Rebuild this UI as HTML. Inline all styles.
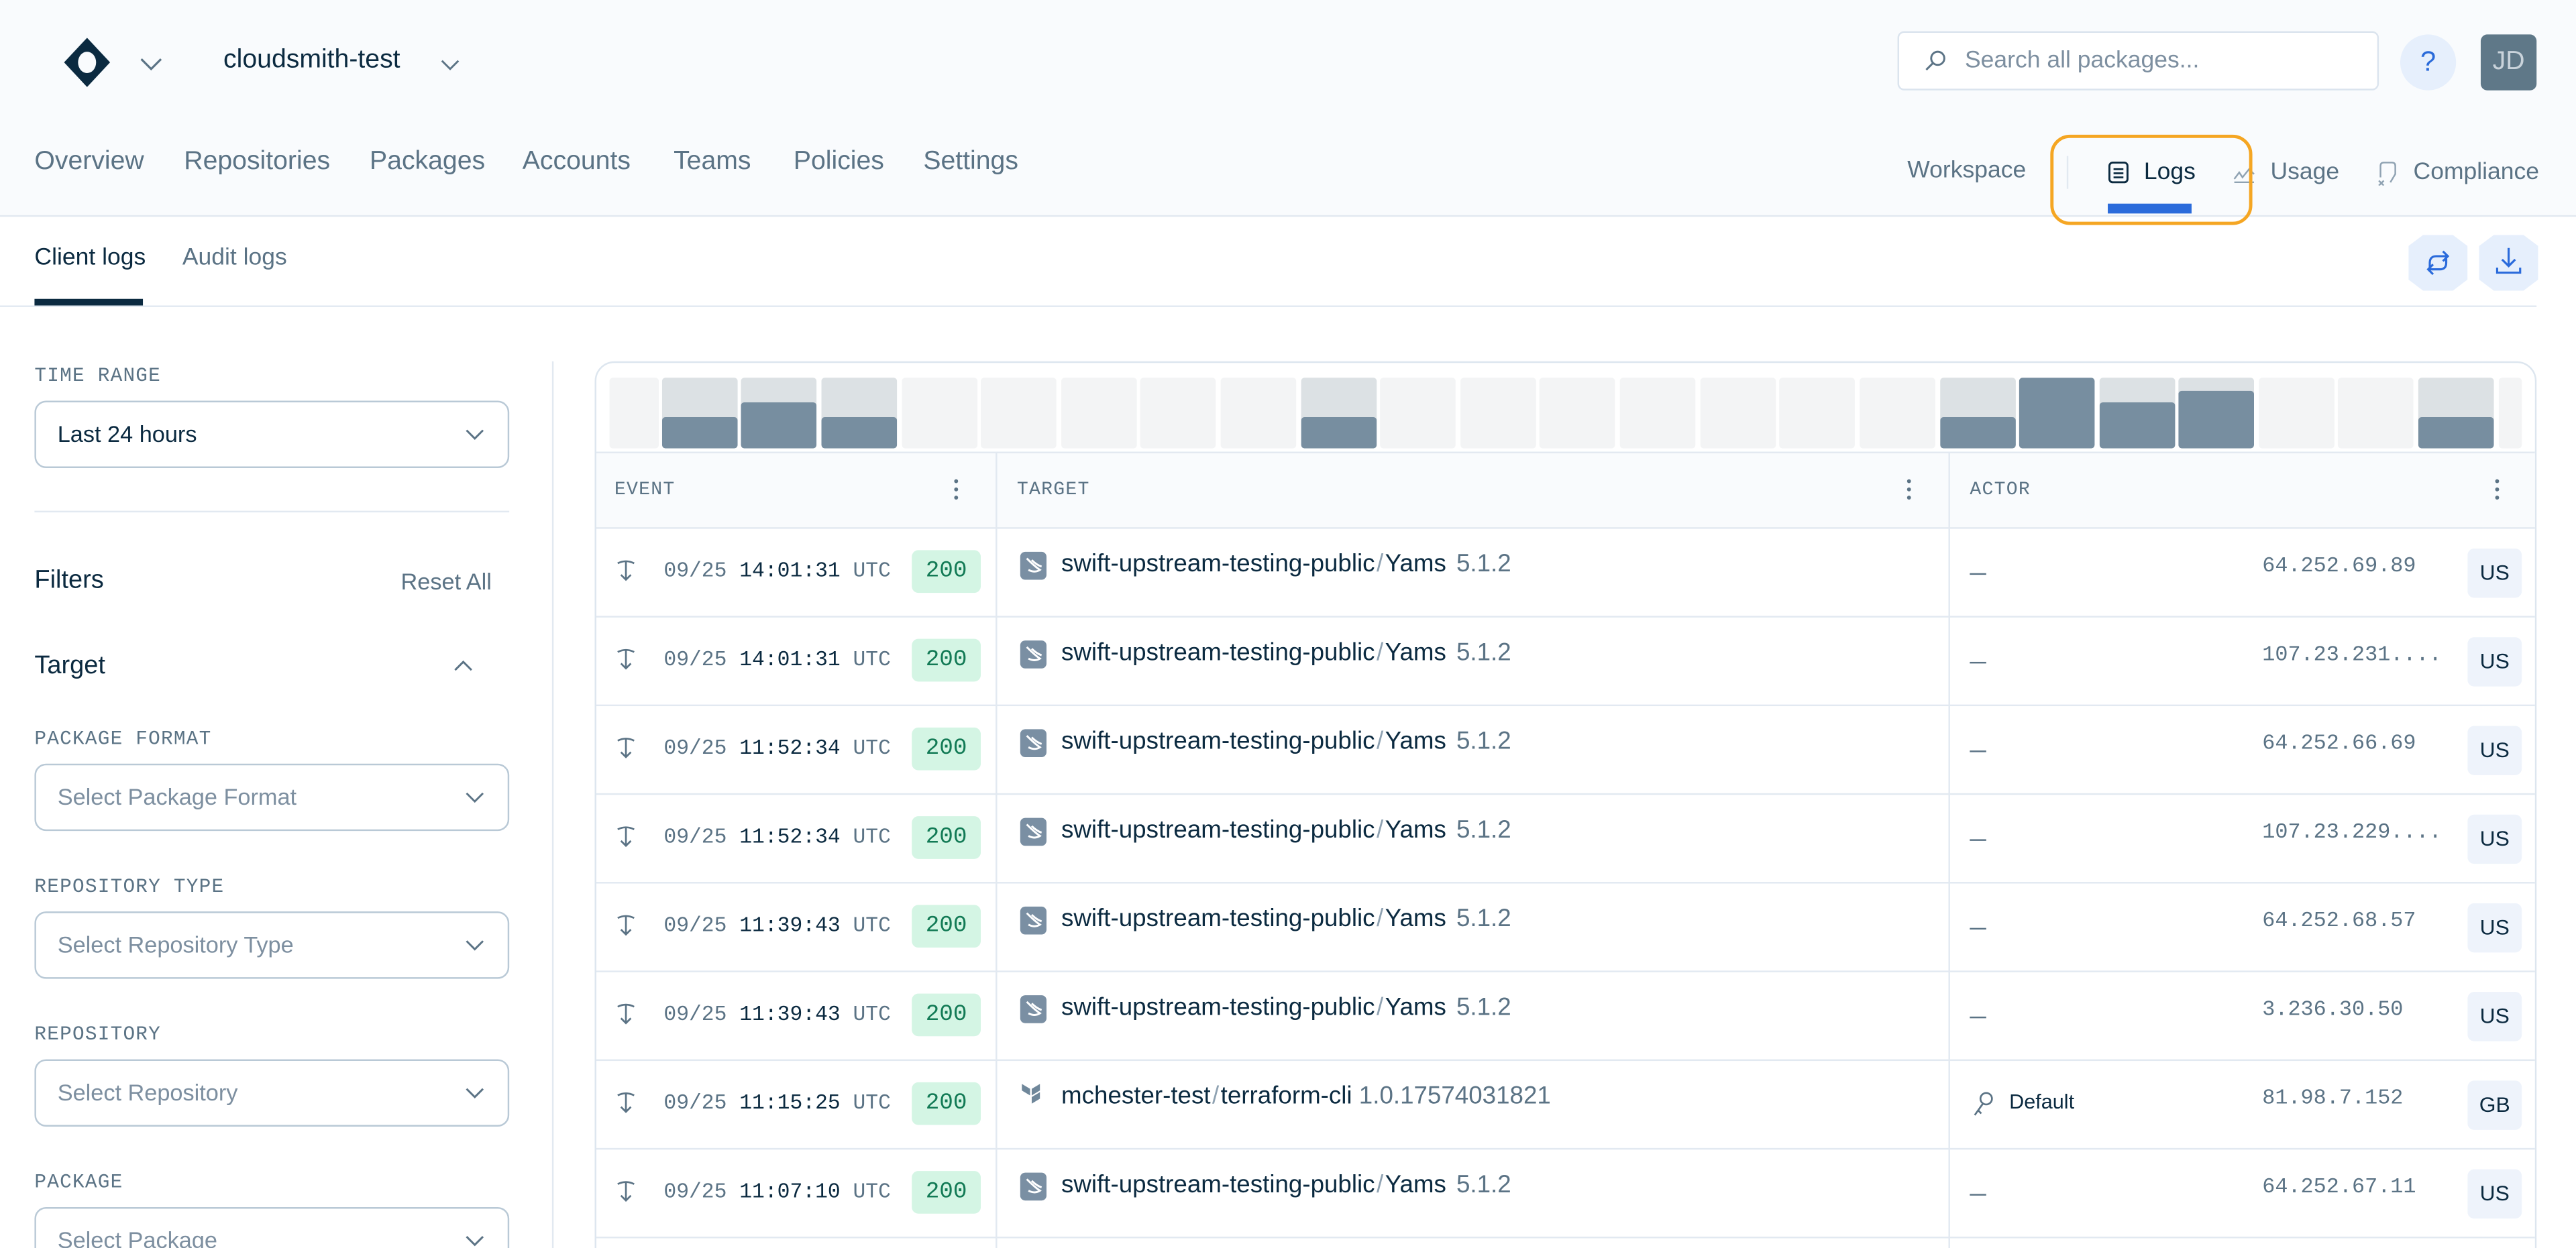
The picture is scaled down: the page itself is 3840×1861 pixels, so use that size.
<!DOCTYPE html>
<html><head><meta charset="utf-8">
<style>
html,body{margin:0;padding:0;width:3840px;height:1860px;overflow:hidden;background:#fff;}
#s{position:absolute;left:0;top:0;width:1568px;height:760px;transform:scale(2.44898);transform-origin:0 0;font-family:"Liberation Sans",sans-serif;color:#0b2a40;overflow:hidden;}
.a{position:absolute;white-space:nowrap;}
.m{font-family:"Liberation Mono",monospace;}
.nav{font-size:16px;color:#5b7385;top:90px;}
.lbl{font-size:12px;color:#5b7385;letter-spacing:0.5px;font-family:"Liberation Mono",monospace;}
.sel{position:absolute;left:21px;width:289px;height:41px;border:1px solid #b9c9d6;border-radius:7px;box-sizing:border-box;}
.sel span{position:absolute;left:13px;top:11px;font-size:14px;color:#7d8fa0;}
.sel svg{position:absolute;right:14px;top:16px;}
.hl{position:absolute;height:1px;background:#e2e9f1;}
.vl{position:absolute;width:1px;background:#e2e9f1;}
.bar{position:absolute;top:230px;height:43px;width:46px;background:#f3f4f5;border-radius:2px;overflow:hidden;}
.bar i{position:absolute;left:0;right:0;bottom:0;background:#778ea0;border-radius:2px;}
.bar.g{background:#dce1e4;}
.row{position:absolute;left:363px;width:1180px;height:54px;}
.badge{position:absolute;left:192px;top:14px;width:42px;height:26px;background:#d4f5e4;color:#127a55;font-size:14px;text-align:center;line-height:26px;border-radius:4px;font-family:"Liberation Mono",monospace;}
.cc{position:absolute;left:1139px;top:13px;width:33px;height:30px;background:#eef3fb;border-radius:4px;font-size:13px;text-align:center;line-height:30px;color:#0b2a40;}
.sl{color:#8fa2b2;margin:0 1px;}
</style></head><body><div id="s">
<div class="a" style="left:0;top:0;width:1568px;height:131px;background:#f9fbfd;"></div>
<div class="hl" style="left:0;top:131px;width:1568px;background:#e2e9f1;"></div>
<svg class="a" style="left:38px;top:22px" width="30" height="32" viewBox="0 0 30 32"><path d="M15 1 L29 16 L15 31 L1 16 Z" fill="#0b2a40"/><ellipse cx="15" cy="16" rx="5.5" ry="6.5" fill="#f9fbfd"/></svg>
<svg class="a" style="left:85px;top:35px" width="14" height="8"><path d="M1 1 L7 7 L13 1" fill="none" stroke="#5b7385" stroke-width="1.3"/></svg>
<div class="a" style="left:136px;top:28px;font-size:16px;">cloudsmith-test</div>
<svg class="a" style="left:268px;top:36px" width="12" height="7"><path d="M1 1 L6 6 L11 1" fill="none" stroke="#5b7385" stroke-width="1.2"/></svg>
<div class="a nav" style="left:21px">Overview</div>
<div class="a nav" style="left:112px">Repositories</div>
<div class="a nav" style="left:225px">Packages</div>
<div class="a nav" style="left:318px">Accounts</div>
<div class="a nav" style="left:410px">Teams</div>
<div class="a nav" style="left:483px">Policies</div>
<div class="a nav" style="left:562px">Settings</div>
<div class="a" style="left:1155px;top:19px;width:293px;height:36px;border:1px solid #dbe4ee;border-radius:4px;background:#fff;box-sizing:border-box;"></div>
<svg class="a" style="left:1171px;top:30px" width="14" height="14"><circle cx="8.5" cy="5.5" r="4" fill="none" stroke="#5b7385" stroke-width="1.2"/><path d="M5.5 8.5 L1.5 12.5" stroke="#5b7385" stroke-width="1.2"/></svg>
<div class="a" style="left:1196px;top:29px;font-size:14.5px;color:#7d8fa0;">Search all packages...</div>
<div class="a" style="left:1461px;top:21px;width:34px;height:34px;border-radius:50%;background:#e6effc;color:#2a6ad9;font-size:17px;text-align:center;line-height:34px;">?</div>
<div class="a" style="left:1510px;top:21px;width:34px;height:34px;border-radius:4px;background:#5f7888;color:#c9d3db;font-size:16px;text-align:center;line-height:34px;">JD</div>
<div class="a" style="left:1161px;top:96px;font-size:14.5px;color:#5b7385;">Workspace</div>
<div class="vl" style="left:1258px;top:95px;height:20px;"></div>
<svg class="a" style="left:1283px;top:98px" width="13" height="14"><rect x="1" y="1" width="11" height="12" rx="2" fill="none" stroke="#0b2a40" stroke-width="1.2"/><path d="M3.5 5h6M3.5 7.5h6M3.5 10h6" stroke="#0b2a40" stroke-width="1.1"/></svg>
<div class="a" style="left:1305px;top:97px;font-size:14.5px;color:#0b2a40;">Logs</div>
<div class="a" style="left:1283px;top:124px;width:51px;height:6px;background:#2b6bdb;"></div>
<svg class="a" style="left:1359px;top:100px" width="14" height="12"><path d="M1 9 L4 5 L6 8 L10 3 L13 6 M1 11 H13" fill="none" stroke="#8fa2b2" stroke-width="1"/></svg>
<div class="a" style="left:1382px;top:97px;font-size:14.5px;color:#5b7385;">Usage</div>
<svg class="a" style="left:1446px;top:98px" width="14" height="15"><path d="M3 10 V3 Q3 1 5 1 H10 Q12 1 12 3 V8 L9 13 M2 12 L5 15 M5 12 L2 15" fill="none" stroke="#8fa2b2" stroke-width="1"/></svg>
<div class="a" style="left:1469px;top:97px;font-size:14.5px;color:#5b7385;">Compliance</div>
<div class="a" style="left:1248px;top:82px;width:123px;height:55px;border:2.5px solid #f5a623;border-radius:12px;box-sizing:border-box;"></div>
<div class="a" style="left:21px;top:149px;font-size:14.5px;color:#0b2a40;">Client logs</div>
<div class="a" style="left:111px;top:149px;font-size:14.5px;color:#5b7385;">Audit logs</div>
<div class="hl" style="left:0;top:186px;width:1544px;"></div>
<div class="a" style="left:21px;top:182px;width:66px;height:4px;background:#0b2a40;"></div>
<div class="a" style="left:1466px;top:143px;width:36px;height:34px;background:#e6effc;clip-path:polygon(25% 0,75% 0,100% 20%,100% 80%,75% 100%,25% 100%,0 80%,0 20%);"></div>
<div class="a" style="left:1509px;top:143px;width:36px;height:34px;background:#e6effc;clip-path:polygon(25% 0,75% 0,100% 20%,100% 80%,75% 100%,25% 100%,0 80%,0 20%);"></div>
<svg class="a" style="left:1475px;top:151px" width="18" height="18"><path d="M4 14 V9 Q4 5 8 5 H15 M12 2 L15 5 L12 8 M14 4 V9 Q14 13 10 13 H3 M6 10 L3 13 L6 16" fill="none" stroke="#2b6bdb" stroke-width="1.3"/></svg>
<svg class="a" style="left:1518px;top:150px" width="18" height="18"><path d="M9 1 V12 M5 8 L9 12 L13 8 M2 13 V16 H16 V13" fill="none" stroke="#2b6bdb" stroke-width="1.3"/></svg>
<div class="a lbl" style="left:21px;top:222px;">TIME RANGE</div>
<div class="sel" style="top:244px;"><span style="color:#0b2a40">Last 24 hours</span><svg width="12" height="8"><path d="M1 1 L6 6 L11 1" fill="none" stroke="#5b7385" stroke-width="1.2"/></svg></div>
<div class="hl" style="left:21px;top:311px;width:289px;"></div>
<div class="a" style="left:21px;top:345px;font-size:15.5px;">Filters</div>
<div class="a" style="left:244px;top:346px;font-size:14px;color:#5b7385;">Reset All</div>
<div class="a" style="left:21px;top:397px;font-size:15.5px;">Target</div>
<svg class="a" style="left:276px;top:401px" width="12" height="8"><path d="M1 7 L6 2 L11 7" fill="none" stroke="#5b7385" stroke-width="1.2"/></svg>
<div class="a lbl" style="left:21px;top:443px;">PACKAGE FORMAT</div>
<div class="sel" style="top:465px;"><span>Select Package Format</span><svg width="12" height="8"><path d="M1 1 L6 6 L11 1" fill="none" stroke="#5b7385" stroke-width="1.2"/></svg></div>
<div class="a lbl" style="left:21px;top:533px;">REPOSITORY TYPE</div>
<div class="sel" style="top:555px;"><span>Select Repository Type</span><svg width="12" height="8"><path d="M1 1 L6 6 L11 1" fill="none" stroke="#5b7385" stroke-width="1.2"/></svg></div>
<div class="a lbl" style="left:21px;top:623px;">REPOSITORY</div>
<div class="sel" style="top:645px;"><span>Select Repository</span><svg width="12" height="8"><path d="M1 1 L6 6 L11 1" fill="none" stroke="#5b7385" stroke-width="1.2"/></svg></div>
<div class="a lbl" style="left:21px;top:713px;">PACKAGE</div>
<div class="sel" style="top:735px;"><span>Select Package</span><svg width="12" height="8"><path d="M1 1 L6 6 L11 1" fill="none" stroke="#5b7385" stroke-width="1.2"/></svg></div>
<div class="vl" style="left:336px;top:220px;height:540px;"></div>
<div class="a" style="left:362px;top:220px;width:1182px;height:560px;border:1px solid #dde6ef;border-radius:12px;box-sizing:border-box;"></div>
<div class="bar" style="left:371px;width:30px"></div>
<div class="bar g" style="left:403px"><i style="height:19px"></i></div>
<div class="bar g" style="left:451px"><i style="height:28px"></i></div>
<div class="bar g" style="left:500px"><i style="height:19px"></i></div>
<div class="bar" style="left:549px"></div>
<div class="bar" style="left:597px"></div>
<div class="bar" style="left:646px"></div>
<div class="bar" style="left:694px"></div>
<div class="bar" style="left:743px"></div>
<div class="bar g" style="left:792px"><i style="height:19px"></i></div>
<div class="bar" style="left:840px"></div>
<div class="bar" style="left:889px"></div>
<div class="bar" style="left:937px"></div>
<div class="bar" style="left:986px"></div>
<div class="bar" style="left:1035px"></div>
<div class="bar" style="left:1083px"></div>
<div class="bar" style="left:1132px"></div>
<div class="bar g" style="left:1181px"><i style="height:19px"></i></div>
<div class="bar g" style="left:1229px"><i style="height:43px"></i></div>
<div class="bar g" style="left:1278px"><i style="height:28px"></i></div>
<div class="bar g" style="left:1326px"><i style="height:35px"></i></div>
<div class="bar" style="left:1375px"></div>
<div class="bar" style="left:1423px"></div>
<div class="bar g" style="left:1472px"><i style="height:19px"></i></div>
<div class="bar" style="left:1521px;width:14px"></div>
<div class="a" style="left:363px;top:275px;width:1180px;height:46px;background:#f9fbfd;"></div>
<div class="hl" style="left:363px;top:275px;width:1180px;"></div>
<div class="a lbl" style="left:374px;top:292px;font-size:11.5px;">EVENT</div>
<div class="a lbl" style="left:619px;top:292px;font-size:11.5px;">TARGET</div>
<div class="a lbl" style="left:1199px;top:292px;font-size:11.5px;">ACTOR</div>
<svg class="a" style="left:580px;top:291px" width="4" height="14"><circle cx="2" cy="2" r="1.2" fill="#5b7385"/><circle cx="2" cy="7" r="1.2" fill="#5b7385"/><circle cx="2" cy="12" r="1.2" fill="#5b7385"/></svg>
<svg class="a" style="left:1160px;top:291px" width="4" height="14"><circle cx="2" cy="2" r="1.2" fill="#5b7385"/><circle cx="2" cy="7" r="1.2" fill="#5b7385"/><circle cx="2" cy="12" r="1.2" fill="#5b7385"/></svg>
<svg class="a" style="left:1518px;top:291px" width="4" height="14"><circle cx="2" cy="2" r="1.2" fill="#5b7385"/><circle cx="2" cy="7" r="1.2" fill="#5b7385"/><circle cx="2" cy="12" r="1.2" fill="#5b7385"/></svg>
<div class="vl" style="left:606px;top:275px;height:485px;"></div>
<div class="vl" style="left:1186px;top:275px;height:485px;"></div>
<div id="rows"></div>
<script>
var d=[["14:01:31","64.252.69.89","US",0],["14:01:31","107.23.231....","US",0],["11:52:34","64.252.66.69","US",0],["11:52:34","107.23.229....","US",0],["11:39:43","64.252.68.57","US",0],["11:39:43","3.236.30.50","US",0],["11:15:25","81.98.7.152","GB",1],["11:07:10","64.252.67.11","US",0]];
var h="";
for(var i=0;i<d.length;i++){var y=321+i*54;var r=d[i];
h+='<div class="hl" style="left:363px;top:'+y+'px;width:1180px;"></div>';
h+='<div class="row" style="top:'+y+'px">';
h+='<svg class="a" style="left:12px;top:20px" width="12" height="14"><path d="M1 2 Q6 -0.5 11 2 M6 1 V12 M3 9 L6 12 L9 9" fill="none" stroke="#5b7385" stroke-width="1.1"/></svg>';
h+='<div class="a m" style="left:41px;top:19px;font-size:12.8px;color:#5b7385;">09/25 <b style="color:#0b2a40;font-weight:normal">'+r[0]+'</b> UTC</div>';
h+='<div class="badge">200</div>';
if(r[3]){h+='<svg class="a" style="left:258px;top:14px" width="16" height="18"><path d="M1 1 L6 4 V8 L1 5 Z M7 4 L12 1 V5 L7 8 Z M7 9 L12 6 V10 L7 13 Z" fill="#6f879a"/></svg>';
h+='<div class="a" style="left:283px;top:14px;font-size:15px;color:#0b2a40;">mchester-test<span class="sl">/</span>terraform-cli <span style="color:#5b7385">1.0.17574031821</span></div>';}
else{h+='<div class="a" style="left:258px;top:15px;width:16px;height:17px;background:#7a8fa3;border-radius:3px;"></div><svg class="a" style="left:260px;top:18px" width="12" height="11"><path d="M2 1 Q7 6 10 8 Q7 10 3 8 M5 2 Q8 5 11 6" fill="none" stroke="#fff" stroke-width="1.2"/></svg>';
h+='<div class="a" style="left:283px;top:14px;font-size:15px;color:#0b2a40;">swift-upstream-testing-public<span class="sl">/</span>Yams <span style="color:#5b7385;margin-left:2px">5.1.2</span></div>';}
if(r[3]){h+='<svg class="a" style="left:837px;top:19px" width="14" height="16"><circle cx="9" cy="5" r="3.5" fill="none" stroke="#5b7385" stroke-width="1.1"/><path d="M7 8 L2 15 M4 12 L6 14" fill="none" stroke="#5b7385" stroke-width="1.1"/></svg><div class="a" style="left:860px;top:19px;font-size:12.5px;color:#0b2a40;">Default</div>';}
else{h+='<div class="a" style="left:836px;top:28px;width:10px;height:1px;background:#5b7385;"></div>';}
h+='<div class="a m" style="left:1014px;top:16px;font-size:13px;color:#5b7385;">'+r[1]+'</div>';
h+='<div class="cc">'+r[2]+'</div></div>';}
h+='<div class="hl" style="left:363px;top:753px;width:1180px;"></div>';
document.getElementById("rows").innerHTML=h;
</script>
</div></body></html>
